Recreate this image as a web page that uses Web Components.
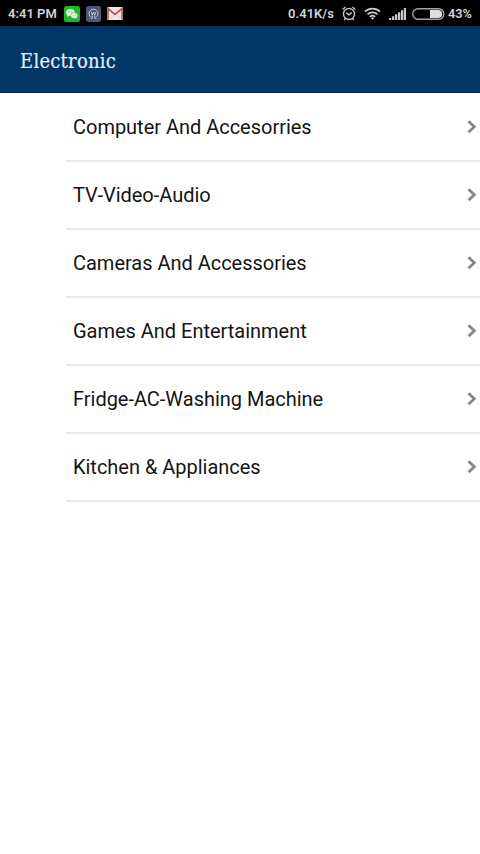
<!DOCTYPE html>
<html lang="en">
<head>
<meta charset="UTF-8">
<meta name="viewport" content="width=device-width, initial-scale=1.0">
<title>Electronic</title>
<style>
    body {
        margin: 0;
        background: #fff;
        font-family: Roboto, "Liberation Sans", sans-serif;
    }
</style>
</head>
<body>
<category-page></category-page>

<script>
class StatusBar extends HTMLElement {
    constructor() {
        super();
        this.attachShadow({ mode: 'open' });
    }

    connectedCallback() {
        this.shadowRoot.innerHTML = `
            <style>
                :host {
                    display: flex;
                    justify-content: space-between;
                    box-sizing: border-box;
                    height: 26px;
                    padding: 1px 8px 0;
                    background: #000;
                    color: #d2d2d2;
                    font-size: 13px;
                    font-weight: 600;
                    line-height: 25px;
                    white-space: nowrap;
                }
                .group {
                    display: flex;
                    align-items: center;
                }
                svg {
                    display: block;
                    flex: none;
                }
                .time { width: 56px; }
                .apps { gap: 6px; }
                .speed { margin-right: 8px; }
                .alarm { margin-right: 8px; }
                .wifi { margin-right: 8px; }
                .signal { margin-right: 6px; }
                .battery { margin-right: 3px; }
                .percent { font-size: 12.8px; }
            </style>
            <div class="group">
                <span class="time">${this.getAttribute('time')}</span>
                <div class="group apps">
                    <svg width="16" height="16" viewBox="0 0 16 16">
                        <rect width="16" height="16" rx="2.5" fill="#22b62f"/>
                        <ellipse cx="6.4" cy="6.5" rx="4.2" ry="3.4" fill="#effbea"/>
                        <path d="M3.6 8.5 3.2 11l2.4-1.4z" fill="#effbea"/>
                        <ellipse cx="10.2" cy="9.5" rx="3.6" ry="3" fill="#effbea" stroke="#22b62f" stroke-width=".6"/>
                        <path d="m11.5 11.7 1.7 1.1-.3-2z" fill="#effbea"/>
                        <g fill="#22b62f"><circle cx="5" cy="5.7" r=".6"/><circle cx="7.7" cy="5.7" r=".6"/><circle cx="9" cy="8.9" r=".5"/><circle cx="11.3" cy="8.9" r=".5"/></g>
                    </svg>
                    <svg width="15" height="16" viewBox="0 0 15 16">
                        <rect width="15" height="16" rx="2.5" fill="#4c5874"/>
                        <g fill="none" stroke="#c3cbd8" stroke-width="1">
                            <path d="M4.3 10.7a4.4 4.4 0 1 1 6.4 0"/>
                            <path d="M5.3 6.2 6.3 9l1.2-2.8L8.7 9l1-2.8"/>
                            <path d="M6.2 9.4v2.8H4.5M8.8 9.4v2.8h1.7"/>
                        </g>
                    </svg>
                    <svg width="16" height="13" viewBox="0 0 16 13">
                        <rect width="16" height="13" rx="1" fill="#eee7e5"/>
                        <path d="M1 12.5V1.5L8 7.4l7-5.9v11" fill="none" stroke="#c4554d" stroke-width="1.7"/>
                        <path d="m2.5 12.5 4-4M13.5 12.5l-4-4" stroke="#d0c8c6" stroke-width=".7"/>
                    </svg>
                </div>
            </div>
            <div class="group">
                <span class="speed">${this.getAttribute('speed')}</span>
                <svg class="alarm" width="14" height="15" viewBox="0 0 14 15" fill="none" stroke="#c4c4c4" stroke-width="1.4">
                    <circle cx="7" cy="8" r="5.5"/>
                    <path d="M.7 3.6 3.5 1M13.3 3.6 10.5 1M4.2 6.6 7 8.9l2.8-2.3M3.4 12.4 2.2 14M10.6 12.4l1.2 1.6"/>
                </svg>
                <svg class="wifi" width="17" height="13" viewBox="0 0 17 13" fill="none" stroke="#c8c8c8" stroke-width="1.7">
                    <path d="M1 4.7a10.8 10.8 0 0 1 15 0M3.5 7.3a7.2 7.2 0 0 1 10 0M5.9 9.8a3.8 3.8 0 0 1 5.2 0"/>
                    <path d="M8.5 12.8 6.9 11a2.4 2.4 0 0 1 3.2 0z" fill="#c8c8c8" stroke="none"/>
                </svg>
                <svg class="signal" width="17" height="12" viewBox="0 0 17 12" fill="#c6c6c6">
                    <path d="M0 10h2.3v2H0zM3 8.3h2.3V12H3zM6 6.3h2.3V12H6zM9 4.3h2.3V12H9zM12 2.2h2.3V12H12zM14.9 0H17v12h-2.1z"/>
                </svg>
                <svg class="battery" width="33" height="12" viewBox="0 0 33 12">
                    <rect x=".7" y=".7" width="31.2" height="10.6" rx="5.3" fill="none" stroke="#a6a6a6" stroke-width="1.4"/>
                    <path d="M18 2h8.2a4 4 0 0 1 0 8H18z" fill="#dedede"/>
                </svg>
                <span class="percent">${this.getAttribute('battery')}</span>
            </div>
        `;
    }
}

class TitleBar extends HTMLElement {
    constructor() {
        super();
        this.attachShadow({ mode: 'open' });
        this.shadowRoot.innerHTML = `
            <style>
                :host {
                    display: flex;
                    align-items: center;
                    box-sizing: border-box;
                    height: 67px;
                    padding: 3px 20px 0;
                    background: #023664;
                    border-bottom: 1px solid #022c54;
                    color: #e4f0fa;
                    font: 20px "DejaVu Serif Condensed", "DejaVu Serif", serif;
                    letter-spacing: 0.25px;
                    -webkit-text-stroke: 0.15px;
                }
            </style>
            <slot></slot>
        `;
    }
}

class CategoryItem extends HTMLElement {
    constructor() {
        super();
        this.attachShadow({ mode: 'open' });
        this.shadowRoot.innerHTML = `
            <style>
                :host {
                    display: flex;
                    align-items: center;
                    justify-content: space-between;
                    box-sizing: border-box;
                    height: 68px;
                    margin-left: 66px;
                    padding: 0 3px 0 7px;
                    border-bottom: 2px solid #e8e8e8;
                    color: #141414;
                    font-size: 20px;
                    letter-spacing: -0.02px;
                    cursor: pointer;
                }
                svg {
                    display: block;
                }
            </style>
            <slot></slot>
            <svg width="10" height="14" viewBox="0 0 10 14">
                <path d="m1.5 1.3 5.8 5.5-5.8 5.5" fill="none" stroke="#868686" stroke-width="2.8"/>
            </svg>
        `;
    }
}

class CategoryPage extends HTMLElement {
    constructor() {
        super();
        this.attachShadow({ mode: 'open' });
    }

    connectedCallback() {
        this.shadowRoot.innerHTML = `
            <style>
                :host {
                    display: block;
                    min-height: 854px;
                    background: #fff;
                }
                main {
                    padding-top: 1px;
                }
            </style>
            <status-bar time="4:41 PM" speed="0.41K/s" battery="43%"></status-bar>
            <title-bar>Electronic</title-bar>
            <main>
                <category-item>Computer And Accesorries</category-item>
                <category-item>TV-Video-Audio</category-item>
                <category-item>Cameras And Accessories</category-item>
                <category-item>Games And Entertainment</category-item>
                <category-item>Fridge-AC-Washing Machine</category-item>
                <category-item>Kitchen &amp; Appliances</category-item>
            </main>
        `;
    }
}

customElements.define('status-bar', StatusBar);
customElements.define('title-bar', TitleBar);
customElements.define('category-item', CategoryItem);
customElements.define('category-page', CategoryPage);
</script>
</body>
</html>
